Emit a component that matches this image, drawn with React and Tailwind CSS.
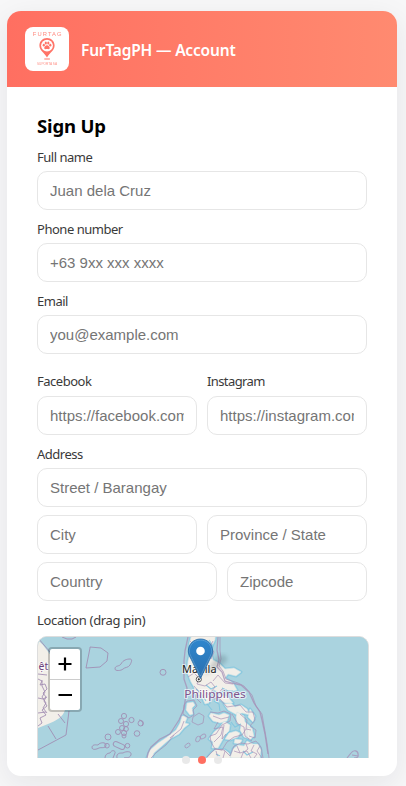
import React from "react";

const uiFont = "font-['Noto_Sans','Open_Sans',sans-serif]";

function Label({ children, className = "", tracking = "tracking-[-0.48px]" }) {
  return (
    <label className={`block h-[18px] whitespace-nowrap text-[13px] leading-[18px] text-[#3a3a3a] ${tracking} ${className}`}>
      {children}
    </label>
  );
}

function Field({ placeholder, className = "w-full" }) {
  return (
    <input
      className={`block h-[39px] min-w-0 rounded-[10px] border border-[#e6e6e6] bg-white px-3 font-['Liberation_Sans',sans-serif] text-[15px] text-black outline-none placeholder:text-[#757575] ${className}`}
      placeholder={placeholder}
    />
  );
}

function Logo() {
  return (
    <svg viewBox="0 0 44 44" className="h-11 w-11 shrink-0 rounded-lg bg-white">
      <g fill="#ff7468" fontFamily="Liberation Sans, sans-serif">
        <text x="7.8" y="8.9" fontSize="5.8" textLength="28.8" opacity=".85">FURTAG</text>
        <text x="12" y="37.6" fontSize="4.2" textLength="20" lengthAdjust="spacingAndGlyphs" opacity=".8">SUPORTA SA</text>
      </g>
      <path d="M22 11c-4.3 0-7.6 3.3-7.6 7.5 0 4.8 4.8 7.2 7.6 12 2.8-4.8 7.6-7.2 7.6-12 0-4.2-3.3-7.5-7.6-7.5Z" fill="#ff7468" />
      <circle cx="22" cy="18.6" r="5.9" fill="#fff" />
      <g fill="#ff7468">
        <ellipse cx="18.8" cy="18.2" rx="1.1" ry="1.4" />
        <ellipse cx="20.8" cy="16" rx="1.1" ry="1.5" />
        <ellipse cx="23.3" cy="16" rx="1.1" ry="1.5" />
        <ellipse cx="25.3" cy="18.2" rx="1.1" ry="1.4" />
        <path d="M22 18.3c-1.4 0-2.8 1.7-2.8 2.8 0 1.4 1.6 1 2.8.9 1.2.1 2.8.5 2.8-.9 0-1.1-1.4-2.8-2.8-2.8Z" />
        <rect x="19.3" y="31.4" width="5.6" height="1.2" opacity=".8" />
      </g>
    </svg>
  );
}

const islets = [
  [124, 716, 2.6], [121, 721, 2.5], [126, 724, 2.6], [122, 728, 2.5], [126, 729, 2.4], [124, 733, 2.6],
  [124, 736, 2], [131.5, 720, 2.6], [140.7, 723.3, 2.7], [137, 733.5, 2.8], [118, 732, 2.5], [108, 737, 3],
  [127.5, 745.7, 2.3], [107, 745.7, 2.3], [163, 672.3, 3],
];

const land = [
  "M191 637l-2 8 1 8-2 8-1 11 4 10 3 5 1 7 6 1 4 9 4-1 0-10 5-3 6 3 4-4 6 3 7-2-4-7-8-5 3-4 8 2 5-4-7-4-9 1-6-6-6-3-2-7 1-7 3-6 1-10-1-4z",
  "M187 703l6-1 2 3-3 3 1 6-3 1-4-5z",
  "M184 716l3 2-2 5 4 1-5 4-5 6-9 5-8 7-8 7-3 7h-5l4-10 8-7 9-6 9-7 4-7 2-7z",
  "M211 713l8 2 5-2 5 2-2 6-7 2-7-2-4-5zM224 721l6 4-1 6-4 4-3 6-4 7-6 0 1-6-4-3 5-7 6-5z",
  "M229 733l7-2 4 2-2 4-8 3-5-1zM224 704l7-1 4 4 6-2 6 4 3 6-8-2-5 2-9-5z",
  "M237 712l7 4 1 6 6 5-3 5 2 7-6-2-4-7 1-4-4-3-1-6zM219 694l9 3 5 6-8 0-6-4zM250 709l5 7-2 6-5-5z",
  "M207 758l5-6 5-3 8 1 4 3 2 5M230 758l3-9 5-4 6 1 3-5 6 3 5 0 3 6-1 8zM235 739l7 1-2 4-6-1zM247 727l5 1 2 8-4 4-3-3z",
];

function MapArt() {
  return (
    <svg viewBox="38 637 330 121" className="block h-[121px] w-[330px]" fontFamily="Noto Sans, sans-serif">
      <defs>
        <linearGradient id="pin" x1="0" y1="0" x2="0" y2="1">
          <stop offset="0" stopColor="#2f86cd" />
          <stop offset="1" stopColor="#2a70b0" />
        </linearGradient>
        <filter id="soft"><feGaussianBlur stdDeviation="2.2" /></filter>
      </defs>
      <rect x="38" y="637" width="330" height="121" fill="#aad3df" />
      <path d="M38 640l5 5 6 8 8 10 9 36-1 11c-2 7-9 11-17 14l-10 4z" fill="#f2efe9" />
      <g fill="none" stroke="#a08bb2" strokeOpacity=".85" strokeWidth="1">
        <path d="M38 638l12 14M69 711l-3 24-28 15M62 637l5 2h5l4-2M48 726l8 13M58 714l7 9" />
        <path d="M38 679l4 2-2 4 5-1 2 5-4 4 3 4-2 4 3 5-5 4 4 5-6 3 2 5-4 3M42 680v6l3 6-3 5 4 6-3 5 4 5M38 698l5 1 4-2M38 713l8-1M38 674l9 1" />
        <path d="M90 647l11 1 7 5-1 8-7 6-14 1 4-20Z" />
        <path d="M115 669c0-4 4-2 6-5 2-4 6-5 9-5 3 0 1 4 0 6-2 3-5 2-7 4s-8 2-8 0Z" />
        <rect x="113" y="743" width="12" height="5" rx="2.5" transform="rotate(24 119 745.5)" />
        <path d="M92 747c1-3 4-2 6-2 2-3 8-3 8 0 0 4-5 2-7 3s-7 3-7-1ZM105 758c0-3 2-5 5-5 2-4 6-2 5 0l-2 5M117 758c-1-5 3-5 6-5 3-2 9-2 8 2-2 4-5 2-7 3" />
        {islets.map(([x, y, r], i) => <circle key={i} cx={x} cy={y} r={r} />)}
        <path d="M139 720c3 0 5 3 3 6" />
      </g>
      <g strokeLinejoin="round">
        {land.map((d) => <path key={d} d={d} fill="none" stroke="#7fc4de" strokeWidth="3" strokeOpacity=".7" />)}
        {land.map((d) => <path key={d + "f"} d={d} fill="#f2efe9" stroke="#cfe3e6" strokeWidth=".6" />)}
      </g>
      <g fill="none" stroke="#80c5df" strokeWidth="1.1" strokeOpacity=".9">
        <path d="M197 640l3 5M209 640l4 6-3 5M206 685l5 4 6-3M196 689l5 4 5 8M222 688l6 3 5 0M214 701l5 3 1 7M207 704l5 6M241 724l-6 3-4-5M243 751l4 4 6-3M216 754l4 2" />
      </g>
      <g fill="none" stroke="#a58db5" strokeOpacity=".75" strokeWidth=".9" strokeLinejoin="round">
        <path d="M188 637l-3 14-1 10 0 18 3 9-1 6-2 15-5 11-9 14-10 5-9 8-3 6-1 5M218 637l-1 13 2 10-2 7 5 5 3 9 7 2 9 2 8 7 5 11 6 9 2 8 3 14 3 20" strokeWidth="1.3" />
        <path d="M220 637l0 13 1 9-2 7 4 5 3 8 12 4 6 3 8 9 4 11 6 8 5 29 2 15" />
        <path d="M190 641l5 5-2 7 4 4M213 641l-3 6 4 5-3 7M188 677l6-4 5 5-2 6 8 2 6-4 4 5-4 5 7 2 4-5 8 4M194 686l5 6-4 5 6 6M207 693l7 6 5-2M213 681l5-6 7 8 8 1" />
        <path d="M187 701l7-1 3 6-4 4 1 5-5 3-6-4 1-9zM199 713l5 3-1 7-5 2-6-3 1-5zM184 721l-3 8-11 9M174 735l-8 10-9 7-6 6" />
        <path d="M210 712l8 1 6-2 7 3-1 7-8 4-6 9-6 2 1 6 4 7 7 1 5-8 7-5 8-2 4-6 5 1M213 716l8 3 8-2M218 722l-4 7 9-2-2 8-7 7M224 725l-2 14 4-5M232 714l6 10 6 3 1 9 7 5M219 698l8 9 13-2 6 7 7 0 2 8-5 6 6 4-1 8-6-2M240 714l7 6-1 9" />
        <path d="M207 757l8-8 9 1 6 6 4-10 7-3 7 1 8-3 5 6 2 11M216 751l2 7M225 751l-2 7M237 746l3 7 7-2 4 7M246 744l2 5-5 4-2 5M254 745l-3 6 6 3-3 4M234 751l6 2M260 746l-3 5 5 7" />
        <ellipse cx="187.5" cy="745.5" rx="3" ry="1.8" transform="rotate(-38 187.5 745.5)" />
        <ellipse cx="198" cy="739" rx="3" ry="2" transform="rotate(-60 198 739)" />
        <ellipse cx="203" cy="736.5" rx="3" ry="2" transform="rotate(-30 203 736.5)" />
        <path d="M347 758l4-5c3-4 7-2 7 1 1 4-2 4-4 4M352 755l6 1" strokeWidth="1.2" />
      </g>
      <g paintOrder="stroke" stroke="#fff" strokeOpacity=".65" strokeWidth="2.2" strokeLinejoin="round">
        <text x="182" y="673" fontSize="11.2" fill="#222" textLength="34.5" lengthAdjust="spacingAndGlyphs">Manila</text>
        <text x="184.3" y="698" fontSize="11.2" fill="#80568e" textLength="61.5" lengthAdjust="spacingAndGlyphs">Philippines</text>
        <text x="38.5" y="670" fontSize="10.5" fill="#6d417d">ệt</text>
      </g>
      <circle cx="198.8" cy="679.3" r="2.6" fill="#fff" stroke="#333" strokeWidth=".8" />
      <circle cx="198.8" cy="679.3" r="1.1" fill="#333" />
      <path d="M203 676l12-17c5-7 14-4 12 1-2 5-14 10-24 16Z" fill="#263b42" opacity=".2" filter="url(#soft)" />
      <path d="M200.5 639c-7 0-12.2 5.2-12.2 12.2 0 3 1.5 5.5 2.9 8.1l9.3 19.2 9.3-19.2c1.4-2.6 2.9-5.1 2.9-8.1 0-7-5.2-12.2-12.2-12.2Z" fill="url(#pin)" stroke="#286da8" strokeWidth=".8" />
      <path d="M200.5 640.1c-6.4 0-11.1 4.7-11.1 11.1 0 2.8 1.4 5.1 2.7 7.6l8.4 17.4 8.4-17.4c1.3-2.5 2.7-4.8 2.7-7.6 0-6.4-4.7-11.1-11.1-11.1Z" fill="none" stroke="#fff" strokeOpacity=".18" />
      <circle cx="200.5" cy="651" r="4.3" fill="#fff" />
    </svg>
  );
}

export default function App() {
  return (
    <div className={`h-[786px] w-[406px] overflow-hidden bg-[#f7f7f8] pl-[7px] pt-[11px] ${uiFont}`}>
      <main className="relative flex h-[765px] w-[390px] flex-col rounded-[14px] bg-white shadow-[0_8px_30px_rgba(20,30,40,0.08)]">
        <header className="flex h-[76px] shrink-0 items-center gap-3 rounded-t-[14px] bg-linear-to-r from-[#ff6f61] to-[#ff8a70] px-[18px]">
          <Logo />
          <div className="whitespace-nowrap pt-[2px] text-[15.5px] leading-5 font-semibold tracking-[-0.18px] text-white">FurTagPH — Account</div>
        </header>
        <section className="flex h-[671px] w-[362px] flex-col overflow-hidden pl-[30px] pt-[26px]">
          <h2 className="h-[26px] shrink-0 whitespace-nowrap text-[18.5px] leading-[26px] font-bold tracking-[-0.15px] text-black">Sign Up</h2>
          <div className="mt-[9px] flex w-[330px] shrink-0 flex-col">
            <Label>Full name</Label>
            <div className="mt-[5px]"><Field placeholder="Juan dela Cruz" /></div>
            <Label className="mt-2.5">Phone number</Label>
            <div className="mt-[5px]"><Field placeholder="+63 9xx xxx xxxx" /></div>
            <Label className="mt-2.5">Email</Label>
            <div className="mt-[5px]"><Field placeholder="you@example.com" /></div>
            <div className="mt-[18px] grid grid-cols-2 gap-x-2.5 gap-y-1.5">
              <Label>Facebook</Label>
              <Label tracking="tracking-[-0.6px]">Instagram</Label>
              <Field placeholder="https://facebook.com/you" />
              <Field placeholder="https://instagram.com/you" />
            </div>
            <Label className="mt-2.5">Address</Label>
            <div className="mt-[5px] flex flex-col gap-2">
              <Field placeholder="Street / Barangay" />
              <div className="grid grid-cols-2 gap-2.5">
                <Field placeholder="City" />
                <Field placeholder="Province / State" />
              </div>
              <div className="flex gap-2.5">
                <Field placeholder="Country" className="w-[180px]" />
                <Field placeholder="Zipcode" className="w-[140px]" />
              </div>
            </div>
            <Label className="mt-2.5" tracking="tracking-[-0.33px]">Location (drag pin)</Label>
          </div>
          <div className="relative mt-[7px] h-[220px] w-[332px] shrink-0 overflow-hidden rounded-[10px] border border-[#ddd] bg-[#aad3df]">
            <MapArt />
            <div className="absolute left-[10px] top-[10px] flex w-[34px] flex-col overflow-hidden rounded-[4px] border-2 border-black/20 bg-white bg-clip-padding">
              <button className="flex h-[31px] items-center justify-center border-b border-[#ccc]" aria-label="Zoom in">
                <svg viewBox="0 0 14 14" className="h-3.5 w-3.5"><path d="M.5 7h13M7 .5v13" stroke="#000" strokeWidth="2.2" /></svg>
              </button>
              <button className="flex h-[30px] items-center justify-center" aria-label="Zoom out">
                <svg viewBox="0 0 14 14" className="h-3.5 w-3.5"><path d="M.5 7h13.5" stroke="#000" strokeWidth="2.2" /></svg>
              </button>
            </div>
          </div>
        </section>
        <div className="absolute bottom-3 left-[175px] flex gap-2">
          <i className="h-2 w-2 rounded-full bg-[#e9e9e9]" />
          <i className="h-2 w-2 rounded-full bg-[#ff6f61]" />
          <i className="h-2 w-2 rounded-full bg-[#e9e9e9]" />
        </div>
      </main>
    </div>
  );
}
